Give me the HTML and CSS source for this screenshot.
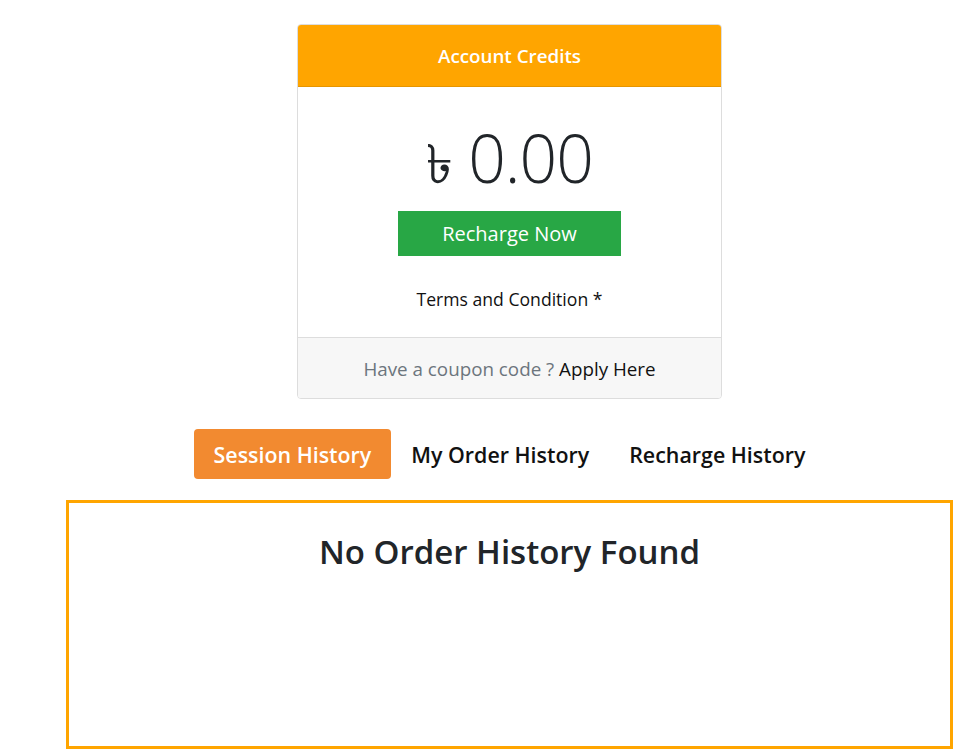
FILE: index.html
```html
<!DOCTYPE html>
<html lang="en">
<head>
    <meta charset="UTF-8">
    <meta name="viewport" content="width=device-width, initial-scale=1.0">
    <title>Account Credits</title>
    <link rel="stylesheet" href="styles.css">
</head>
<body>

    <div class="page">
        <div class="credit-card">
            <div class="credit-header">Account Credits</div>
            <div class="credit-body">
                <div class="amount"><span class="taka">৳</span> 0.00</div>
                <a href="#" class="btn-recharge">Recharge Now</a>
                <a href="#" class="terms">Terms and Condition *</a>
            </div>
            <div class="credit-footer">
                Have a coupon code ? <a href="#">Apply Here</a>
            </div>
        </div>

        <div class="tabs">
            <a href="#" class="tab active">Session History</a>
            <a href="#" class="tab">My Order History</a>
            <a href="#" class="tab">Recharge History</a>
        </div>

        <div class="history-box">
            <h2>No Order History Found</h2>
        </div>
    </div>

</body>
</html>
```

FILE: styles.css
```css
/* Halaman kredit akun */
body {
    font-family: "Open Sans", Arial, sans-serif;
    margin: 0;
    padding: 0;
    background: #fff;
    color: #212529;
    overflow: hidden;
}

a {
    text-decoration: none;
}

.page {
    width: 887px;
    margin-left: 66px;
    padding-top: 24px;
}

.credit-card {
    width: 425px;
    margin: 0 auto;
    border: 1px solid #ddd;
    border-radius: 4px;
    overflow: hidden;
    box-sizing: border-box;
}

.credit-header {
    background-color: #ffa500;
    border-bottom: 1px solid #e69500;
    color: #fff;
    font-size: 18.8px;
    font-weight: 600;
    text-align: center;
    height: 60px;
    padding-top: 1px;
    line-height: 61px;
}

.credit-body {
    display: flex;
    flex-direction: column;
    align-items: center;
    padding: 30px 0 26px;
}

.amount {
    font-size: 66px;
    font-weight: 300;
    line-height: 80px;
    color: #212529;
    letter-spacing: -1px;
}

.taka {
    font-family: "DejaVu Sans", sans-serif;
    font-size: 54px;
}

.btn-recharge {
    display: block;
    width: 223px;
    height: 45px;
    line-height: 45px;
    margin-top: 6px;
    background-color: #28a745;
    color: #fff;
    font-size: 20px;
    text-align: center;
}

.terms {
    margin-top: 31px;
    color: #111;
    font-size: 17.6px;
}

.credit-footer {
    background-color: #f7f7f7;
    border-top: 1px solid #ddd;
    height: 60px;
    line-height: 62px;
    text-align: center;
    font-size: 18.8px;
    color: #6c757d;
}

.credit-footer a {
    color: #111;
}

.tabs {
    display: flex;
    justify-content: center;
    margin-top: 30px;
}

.tab {
    padding: 0 20px;
    height: 50px;
    line-height: 52px;
    font-size: 21.4px;
    font-weight: 600;
    color: #111;
    border-radius: 4px;
}

.tab.active {
    background-color: #f28a30;
    color: #fff;
}

.history-box {
    margin-top: 21px;
    height: 243px;
    border: 3px solid #ffa500;
    text-align: center;
}

.history-box h2 {
    margin: 26px 0 0;
    font-size: 33px;
    font-weight: 600;
    color: #212529;
}
```
